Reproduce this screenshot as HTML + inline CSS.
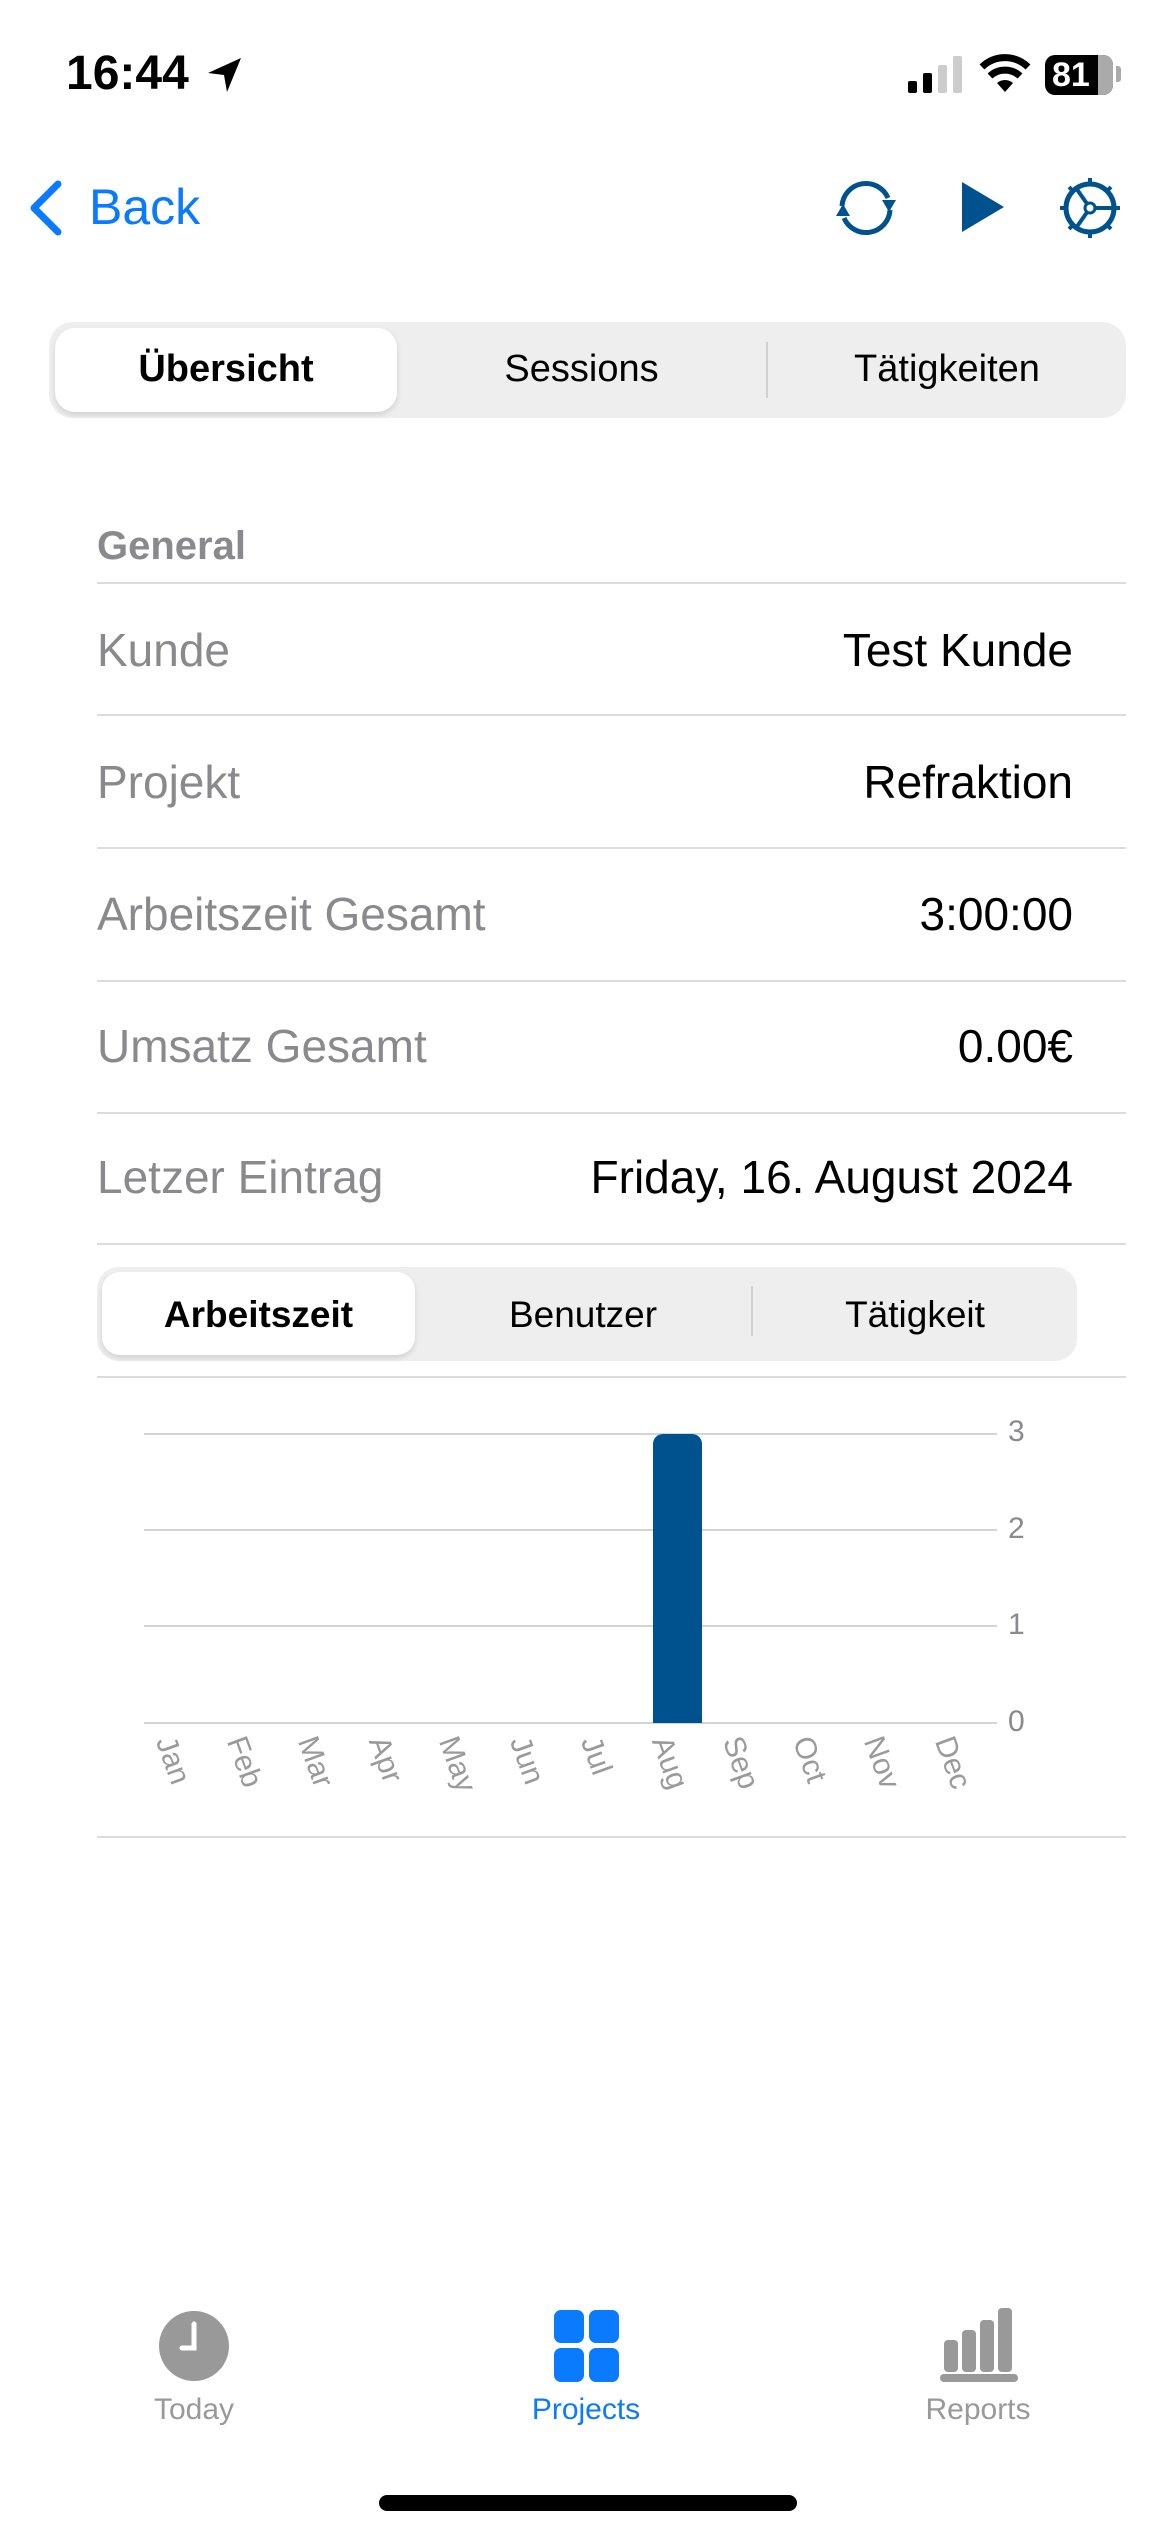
<!DOCTYPE html>
<html><head><meta charset="utf-8"><style>
*{margin:0;padding:0;box-sizing:border-box}
body{width:1170px;height:2532px;background:#fff;position:relative;overflow:hidden;font-family:"Liberation Sans",sans-serif}
.a{position:absolute}
.t{position:absolute;white-space:nowrap;line-height:1}
.line{position:absolute;left:97px;width:1029px;height:2px;background:#dcdcdc}
.lbl{font-size:46px;color:#8a8a8e;left:97px}
.val{font-size:46px;color:#000;right:97px;text-align:right}
.mon{position:absolute;font-size:30px;color:#9a9a9a;transform-origin:0 0;transform:rotate(70deg);white-space:nowrap}
</style></head><body>
<div class="t" style="left:66px;top:50px;font-size:48px;font-weight:bold">16:44</div>
<svg class="a" style="left:205px;top:55px" width="40" height="40" viewBox="0 0 40 40"><path d="M36 3 L3 18 L19 20 L22 37 Z" fill="#000"/></svg>
<svg class="a" style="left:908px;top:55px" width="58" height="40"><rect x="0" y="26" width="9" height="12" rx="2" fill="#000"/><rect x="15" y="18" width="9" height="20" rx="2" fill="#000"/><rect x="30" y="10" width="9" height="28" rx="2" fill="#ccc"/><rect x="45" y="1" width="9" height="37" rx="2" fill="#ccc"/></svg>
<svg class="a" style="left:978px;top:52px" width="54" height="42" viewBox="0 0 54 42"><path d="M27 40 L19 31 A12 12 0 0 1 35 31 Z" fill="#000"/><path d="M12 24 A22 22 0 0 1 42 24" stroke="#000" stroke-width="7" fill="none"/><path d="M4 15 A33 33 0 0 1 50 15" stroke="#000" stroke-width="7" fill="none"/></svg>
<div class="a" style="left:1045px;top:55px;width:68px;height:40px;border-radius:10px;background:#000"></div>
<div class="a" style="left:1098px;top:55px;width:15px;height:40px;border-radius:0 10px 10px 0;background:#aaa"></div>
<div class="a" style="left:1116px;top:66px;width:5px;height:16px;border-radius:0 3px 3px 0;background:#aaa"></div>
<div class="t" style="left:1052px;top:58px;font-size:34px;font-weight:bold;color:#fff">81</div>
<svg class="a" style="left:26px;top:180px" width="40" height="56"><path d="M32 4 L8 28 L32 52" stroke="#0a7aff" stroke-width="7" fill="none" stroke-linecap="round" stroke-linejoin="round"/></svg>
<div class="t" style="left:89px;top:182px;font-size:50px;color:#0a7aff">Back</div>
<svg class="a" style="left:830px;top:176px" width="72" height="64" viewBox="0 0 72 64"><path d="M12 30 A24 24 0 0 1 58 22" stroke="#00528f" stroke-width="5" fill="none"/><path d="M60 34 A24 24 0 0 1 14 42" stroke="#00528f" stroke-width="5" fill="none"/><path d="M52 24 L66 24 L59 36Z" fill="#00528f"/><path d="M6 40 L20 40 L13 28Z" fill="#00528f"/></svg>
<svg class="a" style="left:962px;top:182px" width="44" height="50"><path d="M0 0 L42 25 L0 50Z" fill="#00528f"/></svg>
<svg class="a" style="left:1058px;top:176px" width="64" height="64" viewBox="0 0 64 64"><circle cx="32" cy="32" r="24" stroke="#00528f" stroke-width="5" fill="none"/><g stroke="#00528f" stroke-width="4"><line x1="32" y1="2" x2="32" y2="10"/><line x1="32" y1="54" x2="32" y2="62"/><line x1="2" y1="32" x2="10" y2="32"/><line x1="54" y1="32" x2="62" y2="32"/><line x1="11" y1="11" x2="16" y2="16"/><line x1="48" y1="48" x2="53" y2="53"/><line x1="11" y1="53" x2="16" y2="48"/><line x1="48" y1="16" x2="53" y2="11"/><line x1="32" y1="32" x2="58" y2="32"/><line x1="32" y1="32" x2="18" y2="12"/><line x1="32" y1="32" x2="18" y2="52"/></g><circle cx="32" cy="32" r="5" fill="#fff" stroke="#00528f" stroke-width="3"/></svg>
<div class="a" style="left:49px;top:322px;width:1077px;height:96px;border-radius:24px;background:#eeeeef"></div>
<div class="a" style="left:55px;top:328px;width:342px;height:84px;border-radius:20px;background:#fff;box-shadow:0 3px 6px rgba(0,0,0,.12)"></div>
<div class="a" style="left:766px;top:342px;width:2px;height:56px;background:#d0d0d0"></div>
<div class="t" style="left:55px;width:342px;text-align:center;top:350px;font-size:38px;font-weight:bold">Übersicht</div>
<div class="t" style="left:397px;width:369px;text-align:center;top:350px;font-size:38px">Sessions</div>
<div class="t" style="left:768px;width:358px;text-align:center;top:350px;font-size:38px">Tätigkeiten</div>
<div class="t" style="left:97px;top:526px;font-size:40px;font-weight:bold;color:#8a8a8e">General</div>
<div class="line" style="top:582px"></div>
<div class="t lbl" style="top:627px">Kunde</div><div class="t val" style="top:627px">Test Kunde</div>
<div class="line" style="top:714px"></div>
<div class="t lbl" style="top:759px">Projekt</div><div class="t val" style="top:759px">Refraktion</div>
<div class="line" style="top:847px"></div>
<div class="t lbl" style="top:891px">Arbeitszeit Gesamt</div><div class="t val" style="top:891px">3:00:00</div>
<div class="line" style="top:980px"></div>
<div class="t lbl" style="top:1023px">Umsatz Gesamt</div><div class="t val" style="top:1023px">0.00€</div>
<div class="line" style="top:1112px"></div>
<div class="t lbl" style="top:1154px">Letzer Eintrag</div><div class="t val" style="top:1154px">Friday, 16. August 2024</div>
<div class="line" style="top:1243px"></div>
<div class="a" style="left:97px;top:1267px;width:980px;height:94px;border-radius:22px;background:#eeeeef"></div>
<div class="a" style="left:102px;top:1272px;width:313px;height:83px;border-radius:18px;background:#fff;box-shadow:0 3px 6px rgba(0,0,0,.12)"></div>
<div class="a" style="left:751px;top:1286px;width:2px;height:50px;background:#d0d0d0"></div>
<div class="t" style="left:102px;width:313px;text-align:center;top:1296px;font-size:37px;font-weight:bold">Arbeitszeit</div>
<div class="t" style="left:415px;width:336px;text-align:center;top:1296px;font-size:37px">Benutzer</div>
<div class="t" style="left:753px;width:324px;text-align:center;top:1296px;font-size:37px">Tätigkeit</div>
<div class="line" style="top:1376px"></div>
<div class="a" style="left:144px;top:1433px;width:853px;height:2px;background:#d4d4d4"></div>
<div class="a" style="left:144px;top:1529px;width:853px;height:2px;background:#d4d4d4"></div>
<div class="a" style="left:144px;top:1625px;width:853px;height:2px;background:#d4d4d4"></div>
<div class="a" style="left:144px;top:1722px;width:853px;height:2px;background:#d4d4d4"></div>
<div class="t" style="left:1008px;top:1417px;font-size:30px;color:#8a8a8e">3</div>
<div class="t" style="left:1008px;top:1514px;font-size:30px;color:#8a8a8e">2</div>
<div class="t" style="left:1008px;top:1610px;font-size:30px;color:#8a8a8e">1</div>
<div class="t" style="left:1008px;top:1707px;font-size:30px;color:#8a8a8e">0</div>
<div class="a" style="left:653px;top:1434px;width:49px;height:289px;background:#00528f;border-radius:10px 10px 0 0"></div>
<div class="mon" style="left:180px;top:1732px">Jan</div>
<div class="mon" style="left:251px;top:1732px">Feb</div>
<div class="mon" style="left:322px;top:1732px">Mar</div>
<div class="mon" style="left:393px;top:1732px">Apr</div>
<div class="mon" style="left:463px;top:1732px">May</div>
<div class="mon" style="left:534px;top:1732px">Jun</div>
<div class="mon" style="left:605px;top:1732px">Jul</div>
<div class="mon" style="left:676px;top:1732px">Aug</div>
<div class="mon" style="left:747px;top:1732px">Sep</div>
<div class="mon" style="left:817px;top:1732px">Oct</div>
<div class="mon" style="left:888px;top:1732px">Nov</div>
<div class="mon" style="left:959px;top:1732px">Dec</div>
<div class="line" style="top:1836px"></div>
<svg class="a" style="left:158px;top:2310px" width="72" height="72"><circle cx="36" cy="36" r="35" fill="#999"/><path d="M36 14 V38 H24" stroke="#fff" stroke-width="5" fill="none" stroke-linecap="round"/></svg>
<div class="t" style="left:94px;width:200px;text-align:center;top:2395px;font-size:30px;color:#999">Today</div>
<svg class="a" style="left:554px;top:2310px" width="66" height="72"><rect x="0" y="0" width="30" height="33" rx="7" fill="#0a7aff"/><rect x="35" y="0" width="30" height="33" rx="7" fill="#0a7aff"/><rect x="0" y="38" width="30" height="34" rx="7" fill="#0a7aff"/><rect x="35" y="38" width="30" height="34" rx="7" fill="#0a7aff"/></svg>
<div class="t" style="left:486px;width:200px;text-align:center;top:2395px;font-size:30px;color:#0a7aff">Projects</div>
<svg class="a" style="left:940px;top:2306px" width="80" height="76"><rect x="4" y="34" width="14" height="32" rx="4" fill="#999"/><rect x="22" y="24" width="14" height="42" rx="4" fill="#999"/><rect x="40" y="14" width="14" height="52" rx="4" fill="#999"/><rect x="58" y="2" width="14" height="64" rx="4" fill="#999"/><rect x="0" y="68" width="78" height="8" rx="4" fill="#999"/></svg>
<div class="t" style="left:878px;width:200px;text-align:center;top:2395px;font-size:30px;color:#999">Reports</div>
<div class="a" style="left:379px;top:2495px;width:418px;height:16px;border-radius:8px;background:#000"></div>
</body></html>
